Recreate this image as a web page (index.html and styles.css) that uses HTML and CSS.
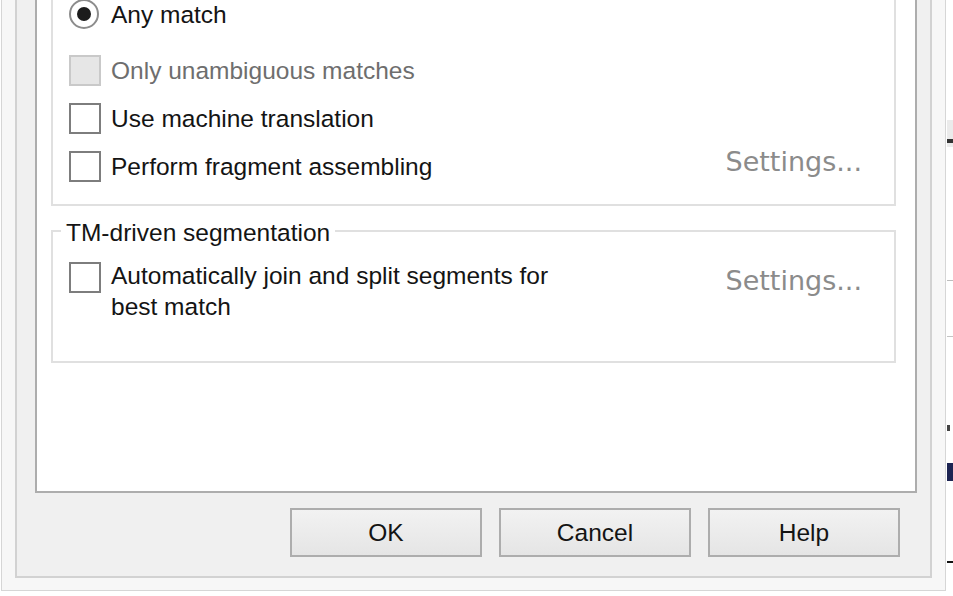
FILE: index.html
```html
<!doctype html>
<html>
<head>
<meta charset="utf-8">
<title>Options</title>
<link rel="stylesheet" href="styles.css">
</head>

<body>
<div class="window">
	<div class="frame">
		<div class="panel">
			<div class="group group-top">
				<div class="row row-radio">
					<span class="radio checked"></span>
					<span class="label">Any match</span>
				</div>
				<div class="row row-first">
					<span class="check disabled"></span>
					<span class="label disabled-text">Only unambiguous matches</span>
				</div>
				<div class="row">
					<span class="check"></span>
					<span class="label">Use machine translation</span>
				</div>
				<div class="row">
					<span class="check"></span>
					<span class="label">Perform fragment assembling</span>
					<span class="settings settings-up">Settings...</span>
				</div>
			</div>

			<fieldset class="group group-seg">
				<legend><span class="legend-text">TM-driven segmentation</span></legend>
				<div class="row row-wrap">
					<span class="check"></span>
					<span class="label label-wrap">Automatically join and split segments for best match</span>
					<span class="settings settings-down">Settings...</span>
				</div>
			</fieldset>
		</div>

		<div class="btn-group">
			<button>OK</button>
			<button>Cancel</button>
			<button>Help</button>
		</div>
	</div>
</div>
<!-- edge of the window behind -->
<div class="behind">
	<div class="mark mark-grey"></div>
	<div class="mark mark-line"></div>
	<div class="mark mark-line2"></div>
	<div class="mark mark-dots"></div>
	<div class="mark mark-navy"></div>
	<div class="mark mark-tick"></div>
</div>
</body>
</html>
```

FILE: styles.css
```css
html, body{
	margin: 0;
	padding: 0;
	background: #fff;
	overflow: hidden;
}
body{
	display: flex;
	align-items: flex-start;
	font-family: "Liberation Sans", Arial, sans-serif;
	font-size: 24.5px;
	color: #141414;
	height: 596px;
}

.window{
	flex: none;
	box-sizing: border-box;
	width: 945px;
	margin-left: 1px;
	padding: 0 13px 12px 13px;
	background: #f7f7f7;
	border: 1px solid #d6d6d6;
	border-top: none;
}
.frame{
	padding: 0 13px 19px 18px;
	background: #f0f0f0;
	border: 2px solid #d2d2d2;
	border-top: none;
}
.panel{
	background: #fff;
	border: 2px solid #adadad;
	border-top: none;
	padding-bottom: 128px;
}

.group{
	border: 2px solid #e0e0e0;
	margin: 0 19px 0 14px;
	padding: 0 32px 0 16px;
}
.group-top{
	border-top: none;
	padding-bottom: 22px;
}
.group-seg{
	margin-top: 11px;
	padding-top: 15px;
	padding-bottom: 39px;
	min-width: 0;
}
.group-seg legend{
	margin-left: -8px;
	padding: 0 5px;
	line-height: 28px;
}
.legend-text{
	position: relative;
	top: 2px;
}

.row{
	display: flex;
	align-items: center;
	line-height: 31px;
	height: 31px;
	margin-top: 17px;
}
.row-radio{
	margin-top: -1px;
	height: 30px;
}
.row-first{
	margin-top: 26px;
}
.row-wrap{
	align-items: flex-start;
	height: auto;
	margin-top: 0;
}

.label{
	margin-left: 10px;
	white-space: nowrap;
}
.row-radio .label{
	margin-left: 12px;
}
.label-wrap{
	white-space: normal;
	width: 460px;
}
.disabled-text{
	color: #6e6e6e;
}

.radio{
	flex: none;
	box-sizing: border-box;
	width: 30px;
	height: 30px;
	border: 2px solid #8c8c8c;
	border-radius: 50%;
	background: #fff;
	display: flex;
	align-items: center;
	justify-content: center;
}
.radio.checked::after{
	content: "";
	width: 14px;
	height: 14px;
	border-radius: 50%;
	background: #1c1c1c;
}

.check{
	flex: none;
	box-sizing: border-box;
	width: 32px;
	height: 31px;
	border: 2px solid #7d7d7d;
	background: #fff;
}
.row-wrap .check{
	margin-top: 2px;
}
.check.disabled{
	border-color: #c9c9c9;
	background: #e6e6e6;
}

.settings{
	margin-left: auto;
	font-family: "DejaVu Sans", Verdana, sans-serif;
	font-size: 27px;
	color: #8b8b8b;
	white-space: nowrap;
}
.settings-up{
	margin-top: -10px;
}
.settings-down{
	margin-top: 5px;
}

.btn-group{
	display: flex;
	justify-content: flex-end;
	gap: 17px;
	padding: 15px 17px 0 0;
}
.btn-group button{
	box-sizing: border-box;
	width: 192px;
	height: 49px;
	margin: 0;
	padding: 0;
	border: 2px solid #adadad;
	background: linear-gradient(#f2f2f2, #e5e5e5);
	font-family: "Liberation Sans", Arial, sans-serif;
	font-size: 24.5px;
	color: #141414;
}

.behind{
	flex: none;
	width: 7px;
	display: flex;
	flex-direction: column;
}
.mark{
	margin-left: 1px;
}
.mark-grey{
	margin-top: 120px;
	height: 27px;
	background: linear-gradient(#ebebeb 70%, #333 70%, #333 85%, #ebebeb 85%);
}
.mark-line{
	margin-top: 133px;
	height: 1px;
	background: #bdbdbd;
}
.mark-line2{
	margin-top: 55px;
	height: 1px;
	background: #c4c4c4;
}
.mark-dots{
	margin-top: 88px;
	width: 3px;
	height: 6px;
	background: #444;
}
.mark-navy{
	margin-top: 32px;
	height: 18px;
	background: #1d2452;
}
.mark-tick{
	margin-top: 80px;
	height: 2px;
	background: #111;
}
```
